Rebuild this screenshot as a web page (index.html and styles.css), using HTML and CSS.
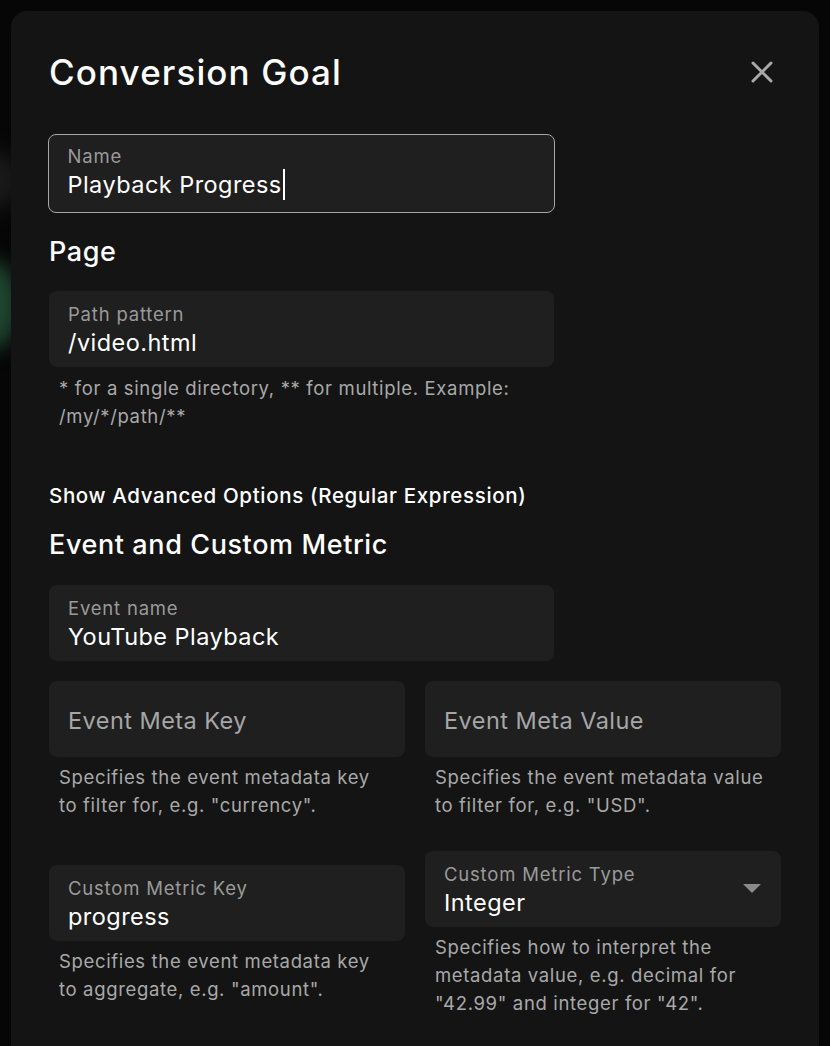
FILE: index.html
```html
<!DOCTYPE html>
<html lang="en">
<head>
<meta charset="utf-8">
<title>Conversion Goal</title>
<link rel="stylesheet" href="styles.css">
</head>
<body>
<div class="backdrop">
  <div class="glow glow-a"></div>
  <div class="glow glow-b"></div>
  <div class="dialog">
    <div class="header">
      <h1 class="title">Conversion Goal</h1>
      <svg class="close" width="22" height="22" viewBox="0 0 22 22"><path d="M2 2 L20 20 M20 2 L2 20" stroke="#a9a9a9" stroke-width="3" stroke-linecap="round"/></svg>
    </div>

    <div class="field field-focused field-name">
      <div class="label">Name</div>
      <div class="value">Playback Progress<span class="caret"></span></div>
    </div>

    <h2 class="section">Page</h2>
    <div class="field field-half">
      <div class="label">Path pattern</div>
      <div class="value">/video.html</div>
    </div>
    <p class="help help-path">* for a single directory, ** for multiple. Example:<br>/my/*/path/**</p>

    <div class="advanced">Show Advanced Options (Regular Expression)</div>

    <h2 class="section section-event">Event and Custom Metric</h2>
    <div class="field field-half">
      <div class="label">Event name</div>
      <div class="value">YouTube Playback</div>
    </div>

    <div class="grid grid-top">
      <div class="col">
        <div class="field field-empty"><div class="placeholder">Event Meta Key</div></div>
        <p class="help">Specifies the event metadata key<br>to filter for, e.g. "currency".</p>
      </div>
      <div class="col">
        <div class="field field-empty"><div class="placeholder">Event Meta Value</div></div>
        <p class="help">Specifies the event metadata value<br>to filter for, e.g. "USD".</p>
      </div>
    </div>

    <div class="grid grid-bottom">
      <div class="col">
        <div class="field">
          <div class="label">Custom Metric Key</div>
          <div class="value">progress</div>
        </div>
        <p class="help">Specifies the event metadata key<br>to aggregate, e.g. "amount".</p>
      </div>
      <div class="col">
        <div class="field field-select">
          <div class="label">Custom Metric Type</div>
          <div class="value">Integer</div>
          <svg class="arrow" width="18" height="9" viewBox="0 0 18 9"><path d="M0 0 H18 L9 9 Z" fill="#8a8a8e"/></svg>
        </div>
        <p class="help">Specifies how to interpret the<br>metadata value, e.g. decimal for<br>"42.99" and integer for "42".</p>
      </div>
    </div>
  </div>
</div>
</body>
</html>
```

FILE: styles.css
```css
* { box-sizing: border-box; }
html, body { margin: 0; padding: 0; }
body {
  background: #050505;
  font-family: Inter, Roboto, sans-serif;
  color: #fff;
  width: 830px;
  height: 1046px;
  overflow: hidden;
}
.backdrop {
  position: relative;
  width: 830px;
  height: 1046px;
  padding: 11px 11px 0 11px;
  background: #060606;
}
.glow {
  position: absolute;
  left: -40px;
  width: 60px;
  border-radius: 50%;
  filter: blur(10px);
}
.glow-a { top: 150px; height: 60px; background: #1a1a1a; }
.glow-b { top: 260px; height: 90px; background: #1f4630; }
.dialog {
  position: relative;
  background: #141414;
  border-radius: 16px 16px 0 0;
  height: 1040px;
  padding: 38px 38px 0 38px;
}
.header {
  display: flex;
  align-items: center;
  justify-content: space-between;
  height: 46px;
  margin-bottom: 39px;
}
.title {
  margin: 0;
  font-size: 35px;
  font-weight: 500;
  letter-spacing: 1.1px;
  line-height: 46px;
}
.close { margin-right: 8px; }
.field {
  position: relative;
  background: #1f1f1f;
  border-radius: 8px;
  height: 76px;
  padding: 11px 19px 0 19px;
}
.field-name {
  width: 507px;
  height: 79px;
  margin-left: -1px;
  border: 1.5px solid #a6a6a6;
  padding: 9px 19px 0 18.5px;
}
.field-half { width: 505px; }
.label {
  font-size: 18.5px;
  line-height: 24px;
  letter-spacing: 0.8px;
  color: #9a9a9a;
}
.value {
  font-size: 23.5px;
  line-height: 32px;
  letter-spacing: 0.45px;
  color: #fff;
  margin-top: 1px;
}
.caret {
  display: inline-block;
  width: 2px;
  height: 31px;
  background: #fff;
  vertical-align: -7px;
  margin-left: 1px;
}
.section {
  margin: 22px 0 22px 0;
  font-size: 27px;
  font-weight: 500;
  letter-spacing: 0.6px;
  line-height: 34px;
}
.help {
  margin: 6px 0 0 0;
  padding-left: 10px;
  font-size: 18.5px;
  line-height: 28px;
  letter-spacing: 0.65px;
  color: #a9a9a9;
}
.help-path { margin-top: 7px; }
.advanced {
  margin-top: 52px;
  font-size: 20.5px;
  font-weight: 500;
  letter-spacing: 0.65px;
  line-height: 28px;
}
.section-event { margin-top: 18px; margin-bottom: 23px; }
.grid {
  display: grid;
  grid-template-columns: 356px 356px;
  column-gap: 20px;
  align-items: center;
}
.grid-top { margin-top: 20px; }
.grid-bottom { margin-top: 32px; }
.field-empty {
  display: flex;
  align-items: center;
  padding-top: 2px;
}
.placeholder {
  font-size: 23.5px;
  letter-spacing: 0.45px;
  color: #a6a6a6;
}
.field-select .arrow {
  position: absolute;
  right: 20px;
  top: 33px;
}
```
